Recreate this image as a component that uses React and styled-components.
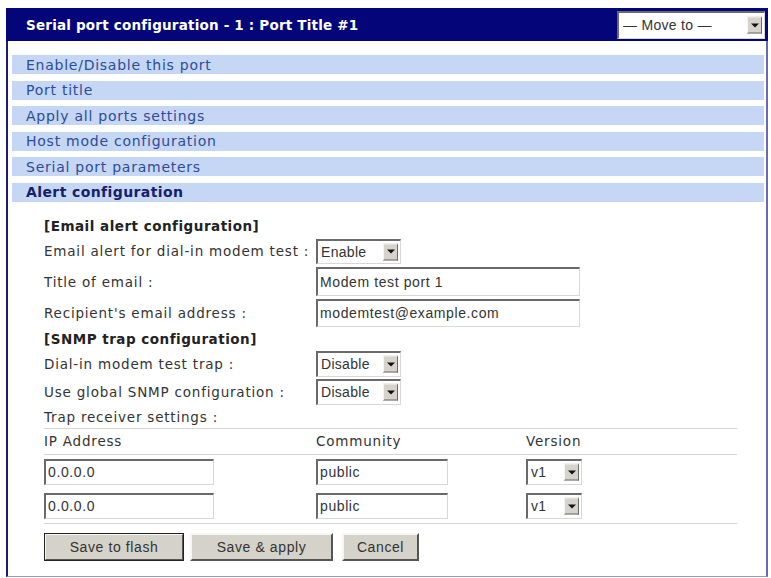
import React from "react";
import styled, { createGlobalStyle } from "styled-components";

const GlobalStyle = createGlobalStyle`
  html, body {
    margin: 0;
    padding: 0;
    background: #ffffff;
  }
  body {
    font-family: "DejaVu Sans", Verdana, sans-serif;
  }
`;

const Page = styled.div`
  padding: 8px 3px 0 6px;
`;

const Panel = styled.div`
  width: 762px;
  height: 569px;
  box-sizing: border-box;
  border-left: 2px solid #1c1c72;
  border-right: 2px solid #6a6ab0;
  border-bottom: 1px solid #9a9ac8;
  background: #ffffff;
  display: flex;
  flex-direction: column;
`;

const Header = styled.div`
  height: 33px;
  margin: 0 -2px;
  background: #05057a;
  display: flex;
  align-items: center;
  justify-content: space-between;
  padding: 0 3px 0 20px;
`;

const Title = styled.div`
  color: #ffffff;
  font-weight: bold;
  font-size: 13.5px;
  letter-spacing: 0.2px;
`;

const SelectWrap = styled.div`
  position: relative;
  display: inline-flex;
  width: ${(p) => p.$w}px;
  height: ${(p) => p.$h}px;
  box-sizing: border-box;
  border-top: 2px solid #6a6a6a;
  border-left: 2px solid #6a6a6a;
  border-right: 1px solid #d8d8d8;
  border-bottom: 1px solid #d8d8d8;
  background: #ffffff;
`;

const NativeSelect = styled.select`
  appearance: none;
  -webkit-appearance: none;
  border: none;
  outline: none;
  background: transparent;
  width: 100%;
  height: 100%;
  padding: 0 0 0 ${(p) => p.$pl || 3}px;
  font-family: "Liberation Sans", Arial, sans-serif;
  font-size: 14px;
  letter-spacing: 0.3px;
  color: #333333;
`;

const ArrowBox = styled.span`
  position: absolute;
  right: 2px;
  top: 50%;
  transform: translateY(-50%);
  width: 15px;
  height: 17px;
  background: #d6d3cc;
  border-top: 1px solid #f4f4f4;
  border-left: 1px solid #f4f4f4;
  border-right: 1px solid #6a6a6a;
  border-bottom: 1px solid #6a6a6a;
  box-sizing: border-box;
  display: flex;
  align-items: center;
  justify-content: center;
  pointer-events: none;
  &::after {
    content: "";
    border-left: 4px solid transparent;
    border-right: 4px solid transparent;
    border-top: 4px solid #111111;
  }
`;

const Body = styled.div`
  padding: 14px 2px 0 4px;
  display: flex;
  flex-direction: column;
  gap: 6.6px;
`;

const Bar = styled.div`
  height: 19px;
  background: #c6d6f5;
  display: flex;
  align-items: center;
  padding-left: 14px;
  font-size: 14px;
  letter-spacing: ${(p) => (p.$active ? "0.4px" : "0.75px")};
  color: ${(p) => (p.$active ? "#15206a" : "#2c4d98")};
  font-weight: ${(p) => (p.$active ? "bold" : "normal")};
`;

const Form = styled.div`
  padding: 13px 0 0 36px;
  display: flex;
  flex-direction: column;
`;

const Row = styled.div`
  height: ${(p) => p.$h}px;
  display: grid;
  grid-template-columns: 272px 1fr;
  align-items: center;
`;

const SectionTitle = styled.div`
  height: ${(p) => p.$h}px;
  display: flex;
  align-items: center;
  font-weight: bold;
  font-size: 13.5px;
  letter-spacing: 0.5px;
  color: #222222;
`;

const Label = styled.div`
  font-size: 13.5px;
  letter-spacing: 0.8px;
  color: #333333;
  white-space: nowrap;
`;

const TextInput = styled.input`
  width: ${(p) => p.$w}px;
  height: ${(p) => p.$h}px;
  box-sizing: border-box;
  border-top: 2px solid #6a6a6a;
  border-left: 2px solid #6a6a6a;
  border-right: 1px solid #d8d8d8;
  border-bottom: 1px solid #d8d8d8;
  padding: 0 2px;
  font-family: "Liberation Sans", Arial, sans-serif;
  font-size: 14px;
  letter-spacing: 0.6px;
  color: #333333;
  outline: none;
  background: #ffffff;
`;

const Rule = styled.div`
  width: 693px;
  height: 1px;
  background: #d4d4d4;
`;

const TableRow = styled.div`
  height: ${(p) => p.$h}px;
  display: grid;
  grid-template-columns: 272px 210px 1fr;
  align-items: center;
`;

const Buttons = styled.div`
  display: flex;
  gap: 6px;
  margin-top: 9px;
`;

const Button = styled.button`
  width: ${(p) => p.$w}px;
  height: 28px;
  margin-left: ${(p) => p.$ml || 0}px;
  box-sizing: border-box;
  background: #d5d2ca;
  border-top: 2px solid #f6f6f6;
  border-left: 2px solid #f6f6f6;
  border-right: 2px solid #555555;
  border-bottom: 2px solid #555555;
  font-family: "Liberation Sans", Arial, sans-serif;
  font-size: 14px;
  letter-spacing: 0.6px;
  color: #333333;
  padding: 0;
  ${(p) => p.$primary && "outline: 1px solid #222; outline-offset: -1px;"}
`;

const Select = ({ w, h, value, options, pl }) => (
  <SelectWrap $w={w} $h={h}>
    <NativeSelect $pl={pl} defaultValue={value}>
      {options.map((o) => (
        <option key={o}>{o}</option>
      ))}
    </NativeSelect>
    <ArrowBox />
  </SelectWrap>
);

const sections = [
  "Enable/Disable this port",
  "Port title",
  "Apply all ports settings",
  "Host mode configuration",
  "Serial port parameters",
];

const receivers = [
  { ip: "0.0.0.0", community: "public", version: "v1" },
  { ip: "0.0.0.0", community: "public", version: "v1" },
];

export default function App() {
  return (
    <>
      <GlobalStyle />
      <Page>
        <Panel>
          <Header>
            <Title>Serial port configuration - 1 : Port Title #1</Title>
            <Select w={148} h={28} value="— Move to —" options={["— Move to —"]} pl={4} />
          </Header>
          <Body>
            {sections.map((s) => (
              <Bar key={s}>{s}</Bar>
            ))}
            <Bar $active>Alert configuration</Bar>
          </Body>
          <Form>
            <SectionTitle $h={22}>[Email alert configuration]</SectionTitle>
            <Row $h={29}>
              <Label>Email alert for dial-in modem test :</Label>
              <Select w={85} h={25} value="Enable" options={["Enable", "Disable"]} />
            </Row>
            <Row $h={32}>
              <Label>Title of email :</Label>
              <TextInput $w={264} $h={29} defaultValue="Modem test port 1" />
            </Row>
            <Row $h={30}>
              <Label>Recipient's email address :</Label>
              <TextInput $w={264} $h={28} defaultValue="modemtest@example.com" />
            </Row>
            <SectionTitle $h={22}>[SNMP trap configuration]</SectionTitle>
            <Row $h={28}>
              <Label>Dial-in modem test trap :</Label>
              <Select w={85} h={26} value="Disable" options={["Enable", "Disable"]} />
            </Row>
            <Row $h={28}>
              <Label>Use global SNMP configuration :</Label>
              <Select w={85} h={26} value="Disable" options={["Enable", "Disable"]} />
            </Row>
            <Row $h={22}>
              <Label>Trap receiver settings :</Label>
            </Row>
            <Rule />
            <TableRow $h={25}>
              <Label>IP Address</Label>
              <Label>Community</Label>
              <Label>Version</Label>
            </TableRow>
            <Rule />
            {receivers.map((r, i) => (
              <TableRow key={i} $h={34}>
                <TextInput $w={170} $h={26} defaultValue={r.ip} />
                <TextInput $w={132} $h={26} defaultValue={r.community} />
                <Select w={56} h={26} value={r.version} options={["v1", "v2c"]} />
              </TableRow>
            ))}
            <Rule />
            <Buttons>
              <Button $w={140} $primary>Save to flash</Button>
              <Button $w={143}>Save &amp; apply</Button>
              <Button $w={77} $ml={3}>Cancel</Button>
            </Buttons>
          </Form>
        </Panel>
      </Page>
    </>
  );
}
